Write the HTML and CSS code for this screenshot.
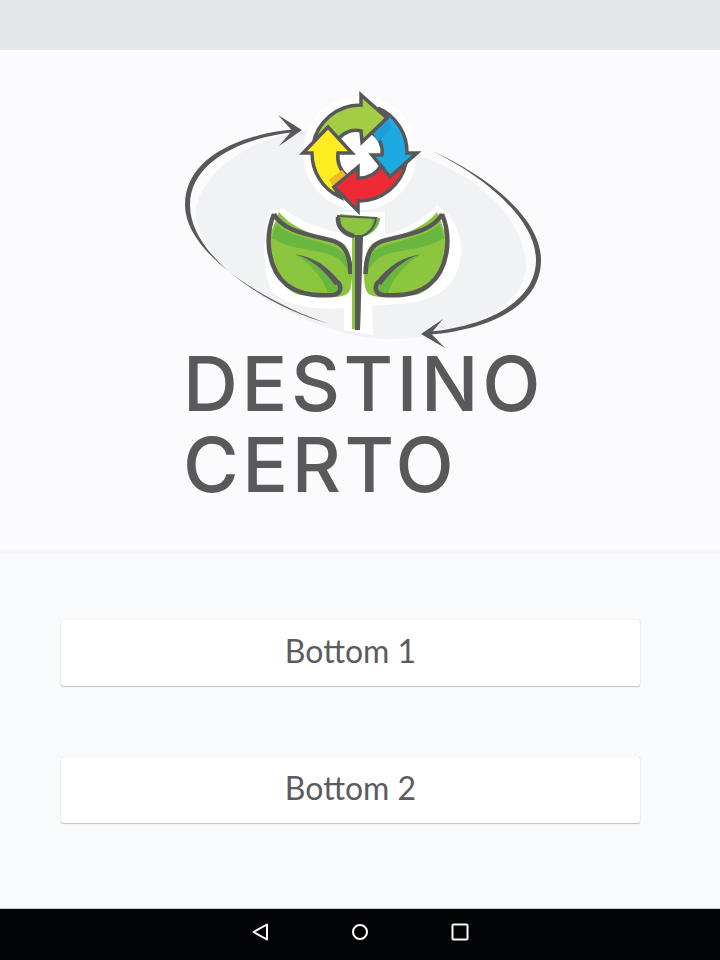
FILE: index.html
```html
<!DOCTYPE html>
<html lang="pt">
<head>
<meta charset="utf-8">
<title>Destino Certo</title>
<link rel="stylesheet" href="styles.css">
</head>
<body>
<div class="app">
  <header class="status-bar"></header>
  <section class="hero">
    <svg class="logo" width="390" height="265" viewBox="170 85 390 265" aria-hidden="true">
      <defs>
        <g id="leaf">
          <path class="g-main" d="M279,212 C290,226 310,235 343,243 C352,250 354,270 351,286 C350,296 342,297 330,297 L300,295 C280,290 266,260 270,235 Z"/>
          <path class="g-dark" d="M276,224 C287,235 315,240 335,247 C347,252 350,265 350,278 C346,263 338,256 325,253 C305,249 285,247 272,238 Z"/>
          <path class="g-dark" d="M296,255 C312,256 328,268 339,283 C341,290 336,293 328,294 C325,280 310,263 296,255 Z"/>
          <path class="ink-line" d="M274,214 C264,238 268,270 287,285 C300,295 320,296 333,295 C341,294 342,287 338,282"/>
          <path class="ink-fill" d="M340,282 C328,266 312,256 295,254.500 C310,258 322,268 335,285 Z"/>
          <path class="ink-line" d="M274,214 C282,230 305,234 330,240 C345,243 350,255 350.500,274"/>
        </g>
      </defs>

      <path class="backdrop" d="M303,130 C360,122 410,150 437,163 C490,185 525,225 526,267 C525,310 450,345 370,338 C290,325 215,275 197,225 C187,185 240,140 303,130 Z"/>

      <circle class="white" cx="360" cy="153" r="57"/>
      <path class="white" d="M283,208 C300,222 320,228 337,232 L340,212 L385,212 L385,235 C410,228 425,218 437,205 C455,215 465,240 460,262 C455,285 440,298 410,303 L372,306 L373,335 L344,330 L344,308 C320,310 290,308 272,292 C262,270 262,240 270,210 Z"/>
      <use href="#leaf"/>
      <use href="#leaf" transform="matrix(-1 0 0 1 716 0)"/>

      <path class="ink-fill" d="M300,129 C258,131 185,150 185,205 C185,255 270,305 330,324 C270,308 190,258 190,205 C190,155 258,134 300,132 Z"/>
      <path class="ink-fill" d="M278,115 L302,130 L279,146 L292,130.500 Z"/>
      <path class="ink-fill" d="M432,151 C480,172 541,215 541,260 C541,310 480,332 424,335 L424,332 C480,328 536,305 536,260 C536,218 482,175 432,151 Z"/>
      <path class="ink-fill" d="M443,319 L421,334 L445,348 L431,333.500 Z"/>

      <path class="blue arrow" d="M378,108 A48 48 0 0 1 407,153 L417,153 L390,177 L372,155 L382,155 A22 22 0 0 0 372,133 L387,118 Z"/>
      <path class="blue-dark" d="M387,120 L373,133 L378,142 L392,128 Z"/>
      <path class="green arrow" d="M313,145 A48 48 0 0 1 361,105 L361,95 L387,118 L362,142 L361,131 A22 22 0 0 0 336,143 Z"/>
      <path class="yellow arrow" d="M328,127 L303,153 L312,153 A48 48 0 0 0 340,197 L334,187 L347,176 A26 26 0 0 1 338,153 L352,153 Z"/>
      <path class="yellow-dark" d="M347,176 L334,187 L329,180 L342,170 Z"/>
      <path class="red arrow" d="M334,187 L358,167 L358,178 A26 26 0 0 0 381,166 L390,177 L406,163 A48 48 0 0 1 358,201 L358,211 Z"/>

      <path class="g-main" d="M340,214 L380,218 C379,228 372,234 362,237 L360,330 L352,329 L352,237 C344,234 338,225 340,214 Z"/>
      <path class="g-dark" d="M372,217 L380,218 C379,228 372,234 364,236 C370,231 373,224 372,217 Z"/>
      <path class="ink-line-thin" d="M337,216 L377,218"/>
      <path class="ink-line" d="M338,217 C337,228 345,234 354,236"/>
      <path class="ink-line-thin" d="M376,218 C375,228 368,234 362,236 L352,236"/>
      <path class="ink-fill" d="M355,236 L363,236 L360,330 L355,330 Z"/>
    </svg>
    <h1 class="brand">DESTINO<br>CERTO</h1>
  </section>
  <main class="actions">
    <button class="action" type="button">Bottom 1</button>
    <button class="action" type="button">Bottom 2</button>
  </main>
  <nav class="nav-bar" aria-label="Navegação">
    <svg class="nav-icon" width="18" height="18" viewBox="0 0 18 18" aria-hidden="true"><path d="M16,1.500 L2.500,9 L16,16.500 Z"/></svg>
    <svg class="nav-icon" width="18" height="18" viewBox="0 0 18 18" aria-hidden="true"><circle cx="9" cy="9" r="7"/></svg>
    <svg class="nav-icon" width="18" height="18" viewBox="0 0 18 18" aria-hidden="true"><rect x="1.500" y="1.500" width="15" height="15" rx="1"/></svg>
  </nav>
</div>
</body>
</html>
```
FILE: styles.css
```css
* { box-sizing: border-box; }
html, body { margin: 0; padding: 0; }
body { background: #f9fafc; font-family: "Lato", "Liberation Sans", sans-serif; }

.app { width: 720px; height: 960px; display: flex; flex-direction: column; overflow: hidden; }

.status-bar { height: 50px; background: #e5e6e8; flex: none; }

.hero {
  height: 503px;
  flex: none;
  padding: 35px 0 0 170px;
  background: #fbfbfd;
  border-bottom: 3px solid #f5f5f7;
}
.logo { display: block; }
.brand {
  margin: -7px 0 0 13px;
  font-family: "Inter", "Liberation Sans", sans-serif;
  font-weight: 500;
  font-size: 76px;
  line-height: 81px;
  letter-spacing: 3.6px;
  color: #59595b;
}

.actions {
  flex: 1;
  display: flex;
  flex-direction: column;
  gap: 71px;
  padding: 67px 80px 0 61px;
}
.action {
  height: 66px;
  border: 0;
  border-radius: 2px;
  background: #fff;
  box-shadow: 0 1px 1px rgba(0,0,0,.2), 0 0 1px rgba(0,0,0,.3);
  font-family: "Lato", "Liberation Sans", sans-serif;
  font-size: 32px;
  color: #5c5c5e;
  padding: 0 0 6px;
}

.nav-bar {
  height: 52px;
  flex: none;
  display: flex;
  justify-content: center;
  align-items: center;
  gap: 82px;
  padding-bottom: 5px;
  background: #030406;
  border-top: 1px solid #c9c9cb;
}
.nav-icon { fill: none; stroke: #fff; stroke-width: 2; stroke-linejoin: round; }

.backdrop { fill: #f1f2f4; }
.white { fill: #fff; }
.g-main { fill: #8cc63f; }
.g-dark { fill: #6ab73f; }
.ink-fill { fill: #58585a; }
.ink-line { fill: none; stroke: #58585a; stroke-width: 4.5; }
.ink-line-thin { fill: none; stroke: #58585a; stroke-width: 2; }
.arrow { stroke: #58585a; stroke-width: 3.5; stroke-linejoin: miter; }
.blue { fill: #1fa9e1; }
.blue-dark { fill: #1d9cd8; }
.green { fill: #a3cd45; }
.yellow { fill: #fdec20; }
.yellow-dark { fill: #eeb922; }
.red { fill: #ee2b35; }
```
